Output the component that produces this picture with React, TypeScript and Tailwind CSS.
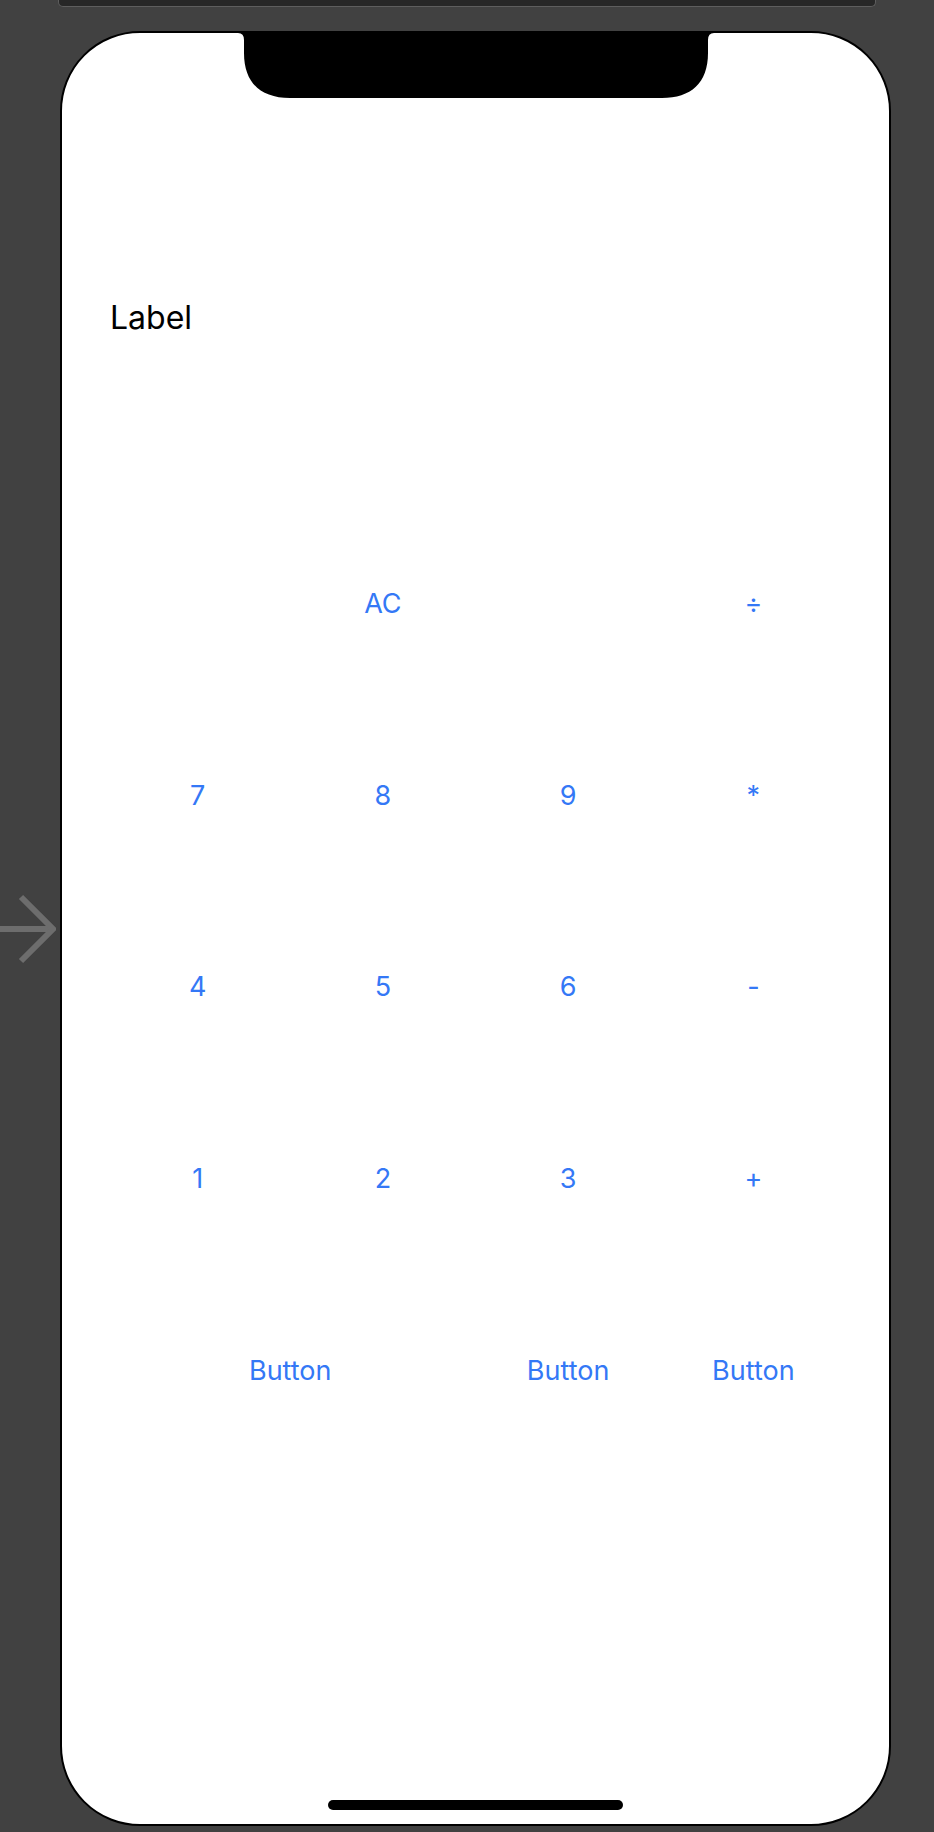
const blue = "text-[#3478f6]";

const rows: { label: string; span?: boolean }[][] = [
  [{ label: "" }, { label: "AC" }, { label: "" }, { label: "÷" }],
  [{ label: "7" }, { label: "8" }, { label: "9" }, { label: "*" }],
  [{ label: "4" }, { label: "5" }, { label: "6" }, { label: "-" }],
  [{ label: "1" }, { label: "2" }, { label: "3" }, { label: "+" }],
  [{ label: "Button", span: true }, { label: "Button" }, { label: "Button" }],
];

const Notch = () => (
  <svg
    className="absolute left-1/2 top-0 -translate-x-1/2"
    width="476"
    height="66"
    viewBox="0 0 476 66"
  >
    <path
      d="M0 0 H476 Q470 0 470 7 V20 C470 50 453 65 424 65 H52 C23 65 6 50 6 20 V7 Q6 0 0 0 Z"
      fill="#000"
    />
  </svg>
);

const Arrow = () => (
  <svg width="56" height="70" viewBox="0 0 56 70">
    <path d="M0 35 H53" stroke="#6d6d6d" strokeWidth="6" fill="none" />
    <path d="M21 3 L53 35 L21 67" stroke="#6d6d6d" strokeWidth="6" fill="none" />
  </svg>
);

export default function App() {
  return (
    <div
      className="w-[934px] h-[1832px] bg-[#414141] overflow-hidden flex flex-col"
      style={{ fontFamily: "Inter, 'Noto Sans', sans-serif" }}
    >
      <div className="mx-[58px] h-[7px] bg-[#272727] border border-t-0 border-[#5e5e5e] rounded-b-[5px]" />
      <div className="flex items-center mt-[24px]">
        <div className="w-[60px] flex items-center">
          <Arrow />
        </div>
        <div className="relative w-[831px] h-[1795px] bg-white border-2 border-black rounded-[80px] overflow-hidden flex flex-col">
          <Notch />
          <div className="mt-[265px] ml-[48px] h-[40px] flex items-center text-[32px] text-black leading-none">
            Label
          </div>
          <div className="mt-[170px] mx-[43px] grid grid-cols-4">
            {rows.map((row, i) =>
              row.map((b, j) => (
                <div
                  key={`${i}-${j}`}
                  className={`h-[191.6px] flex items-center justify-center text-[27px] leading-none ${blue} ${
                    b.span ? "col-span-2" : ""
                  }`}
                >
                  {b.label}
                </div>
              ))
            )}
          </div>
          <div className="flex-1" />
          <div className="mb-[14px] mx-auto w-[295px] h-[10px] rounded-full bg-black" />
        </div>
      </div>
    </div>
  );
}
